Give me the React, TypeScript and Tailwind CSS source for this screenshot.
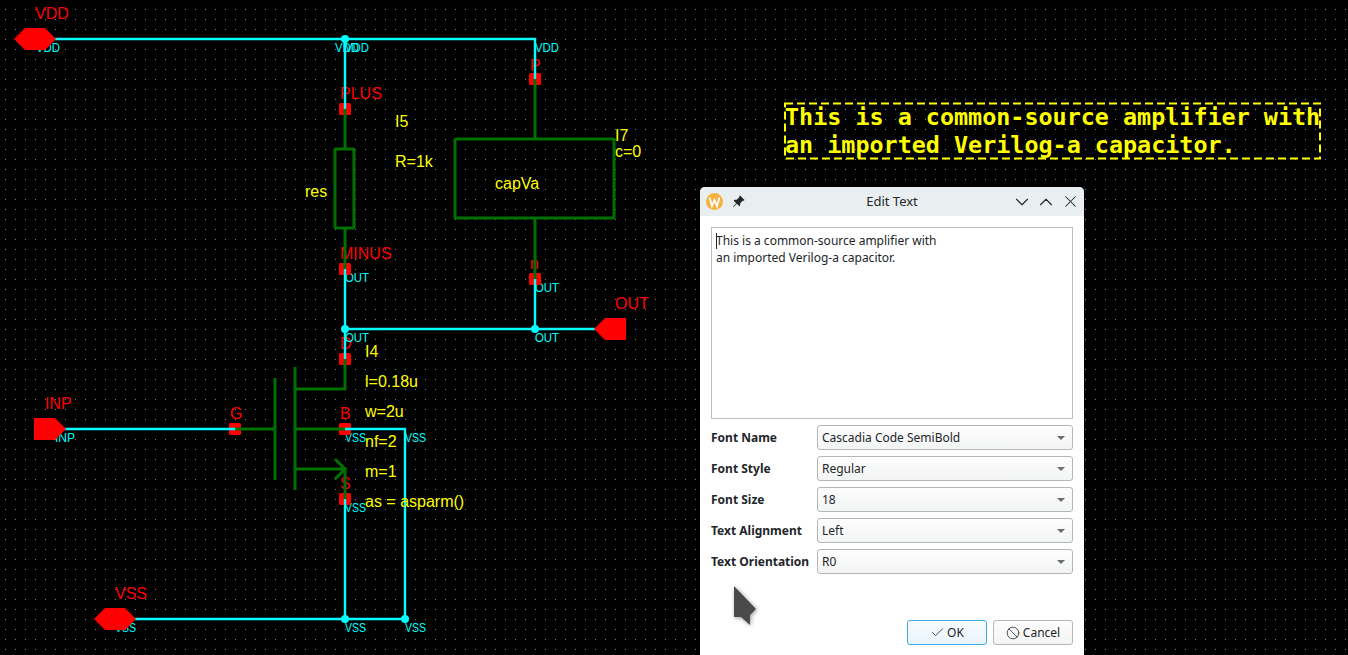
import { Ban, Check, ChevronDown, ChevronUp, X } from 'lucide-react';
import { BsPinAngleFill } from 'react-icons/bs';

const wires = [
  'M50 39H535V79',
  'M345 39V109',
  'M345 269V359',
  'M535 279V329',
  'M345 329H600',
  'M60 429H235',
  'M345 429H405V619',
  'M345 499V619',
  'M130 619H405',
];

const junctions = [
  [345, 39],
  [345, 329],
  [535, 329],
  [345, 619],
  [405, 619],
];

const pinSquares = [
  [345, 109],
  [535, 79],
  [345, 269],
  [535, 279],
  [345, 359],
  [235, 429],
  [345, 429],
  [345, 499],
];

const symbolLines = [
  'M345 109V149',
  'M345 229V269',
  'M535 79V139',
  'M535 218V279',
  'M345 359V389H295',
  'M275 378V480',
  'M295 367V490',
  'M235 429H275',
  'M295 429H345',
  'M295 469H345V499',
  'M335 459L345 469L335 479',
];

// the screenshot's hinted 12px glyphs run narrower than the font's real widths
const netWidths: Record<string, number> = { VDD: 24, OUT: 24, INP: 20, VSS: 21 };

const netLabels: [string, number, number][] = [
  ['VDD', 36, 52],
  ['VDD', 335, 52],
  ['VDD', 345, 52],
  ['VDD', 535, 52],
  ['OUT', 345, 282],
  ['OUT', 535, 292],
  ['OUT', 345, 342],
  ['OUT', 535, 342],
  ['INP', 55, 442],
  ['VSS', 345, 442],
  ['VSS', 405, 442],
  ['VSS', 345, 512],
  ['VSS', 115, 632],
  ['VSS', 345, 632],
  ['VSS', 405, 632],
];

const pinLabels: [string, number, number][] = [
  ['VDD', 35, 19],
  ['VSS', 115, 599],
  ['INP', 45, 409],
  ['OUT', 615, 309],
  ['PLUS', 340, 99],
  ['MINUS', 340, 259],
  ['P', 530, 71],
  ['n', 530, 269],
  ['D', 340, 349],
  ['G', 230, 419],
  ['B', 340, 419],
  ['S', 340, 489],
];

const attrLabels: [string, number, number][] = [
  ['I5', 395, 127],
  ['R=1k', 395, 167],
  ['res', 305, 197],
  ['capVa', 495, 189],
  ['I7', 615, 141],
  ['c=0', 615, 157],
  ['I4', 365, 357],
  ['l=0.18u', 365, 387],
  ['w=2u', 365, 417],
  ['nf=2', 365, 447],
  ['m=1', 365, 477],
  ['as = asparm()', 365, 507],
];

const ioPins = [
  '14,39 25,28 45,28 56,39 45,50 25,50',
  '94,619 105,608 125,608 136,619 125,630 105,630',
  '34,418 55,418 66,429 55,440 34,440',
  '594,329 605,318 626,318 626,340 605,340',
];

const fields = [
  ['Font Name', 'Cascadia Code SemiBold'],
  ['Font Style', 'Regular'],
  ['Font Size', '18'],
  ['Text Alignment', 'Left'],
  ['Text Orientation', 'R0'],
];

function Schematic() {
  return (
    <svg width="1348" height="655" className="block font-['Liberation_Sans',sans-serif]">
      <defs>
        <pattern id="dots" x="5" y="9" width="10" height="10" patternUnits="userSpaceOnUse">
          <rect width="1" height="1" fill="#808080" />
        </pattern>
      </defs>
      <rect width="1348" height="655" fill="url(#dots)" />

      {pinLabels.map(([label, x, y]) => (
        <text key={`${label}${x}`} x={x} y={y} className="fill-[#ff0000] text-[16px]">
          {label}
        </text>
      ))}
      {netLabels.map(([label, x, y]) => (
        <text
          key={`${label}${x}${y}`}
          x={x}
          y={y}
          textLength={netWidths[label]}
          lengthAdjust="spacingAndGlyphs"
          className="fill-[#00ffff] text-[12px]"
        >
          {label}
        </text>
      ))}

      {pinSquares.map(([x, y]) => (
        <rect key={`${x}${y}`} x={x - 6} y={y - 6} width="12" height="12" rx="1.5" fill="#ff0000" />
      ))}

      <g fill="none" stroke="#00ffff" strokeWidth="2.4">
        {wires.map((d) => (
          <path key={d} d={d} />
        ))}
      </g>
      {junctions.map(([x, y]) => (
        <circle key={`${x}${y}`} cx={x} cy={y} r="4" fill="#00ffff" />
      ))}

      <g fill="none" stroke="#007000" strokeWidth="3">
        {symbolLines.map((d) => (
          <path key={d} d={d} />
        ))}
        <rect x="335" y="149" width="19" height="79" rx="1" />
        <rect x="455" y="139" width="159" height="79" rx="1" />
      </g>

      {ioPins.map((points) => (
        <polygon key={points} points={points} fill="#ff0000" />
      ))}

      {attrLabels.map(([label, x, y]) => (
        <text key={`${label}${x}`} x={x} y={y} className="fill-[#ffff00] text-[16px]">
          {label}
        </text>
      ))}

      <rect
        x="785"
        y="103.5"
        width="535"
        height="55"
        fill="none"
        stroke="#ffff00"
        strokeWidth="2"
        strokeDasharray="8 4"
      />
      <g className="fill-[#ffff00] font-['DejaVu_Sans_Mono',monospace] text-[23.4px] font-bold">
        <text x="785" y="125">This is a common-source amplifier with</text>
        <text x="785" y="153">an imported Verilog-a capacitor.</text>
      </g>
    </svg>
  );
}

function ComboBox({ value }: { value: string }) {
  return (
    <div className="flex h-[25px] w-[256px] items-center justify-between rounded-[3px] border border-[#b4b6b8] bg-gradient-to-b from-[#fdfdfd] to-[#f3f4f4] pl-[4px] pr-[7px]">
      <span>{value}</span>
      <span className="h-0 w-0 border-x-[4px] border-t-[4px] border-x-transparent border-t-[#6a6d70]" />
    </div>
  );
}

function EditTextDialog() {
  return (
    <div className="absolute left-[700px] top-[187px] flex h-[490px] w-[384px] flex-col rounded-t-[5px] bg-white font-['Noto_Sans',sans-serif] text-[12px] text-[#232629]">
      <div className="relative flex h-[29px] shrink-0 items-center rounded-t-[5px] bg-[#e9eef1] pl-[6px] pr-[2px]">
        <svg width="17" height="17" viewBox="0 0 17 17">
          <circle cx="8.5" cy="8.5" r="8.5" fill="#f4b13e" />
          <path d="M3.5 4.5L6 13L8.5 7L11 13L13.5 4.5" fill="none" stroke="#ffffff" strokeWidth="1.8" />
        </svg>
        <BsPinAngleFill className="ml-[9px] h-[13px] w-[13px] text-[#232629]" />
        <span className="absolute inset-x-0 text-center text-[13px]">Edit Text</span>
        <div className="relative ml-auto flex items-center">
          <span className="flex w-[24px] justify-center">
            <ChevronDown size={22} strokeWidth={1.2} />
          </span>
          <span className="flex w-[24px] justify-center">
            <ChevronUp size={22} strokeWidth={1.2} />
          </span>
          <span className="flex w-[24px] justify-center">
            <X size={19} strokeWidth={1.3} />
          </span>
        </div>
      </div>

      <div className="flex flex-1 flex-col px-[11px] pt-[11px]">
        <div className="h-[192px] border border-[#bdbdbd] bg-white px-[4px] pt-[4px] leading-[17px]">
          <div className="relative">
            <span className="absolute left-0 top-[1px] h-[16px] w-px bg-[#232629]" />
            This is a common-source amplifier with
          </div>
          <div>an imported Verilog-a capacitor.</div>
        </div>

        <div className="mt-[6px] flex flex-col gap-[6px]">
          {fields.map(([label, value]) => (
            <div key={label} className="flex items-center justify-between">
              <span className="font-bold">{label}</span>
              <ComboBox value={value} />
            </div>
          ))}
        </div>

        <div className="mt-[46px] flex justify-end gap-[6px]">
          <button className="flex h-[25px] w-[80px] items-center justify-center gap-[2px] rounded-[3px] border border-[#3daee9] bg-gradient-to-b from-[#f7fbfe] to-[#e9f4fb]">
            <Check size={15} strokeWidth={1.3} />
            OK
          </button>
          <button className="flex h-[25px] w-[80px] items-center justify-center gap-[3px] rounded-[3px] border border-[#b4b6b8] bg-gradient-to-b from-[#fdfdfd] to-[#f3f4f4]">
            <Ban size={14} strokeWidth={1.3} />
            Cancel
          </button>
        </div>
      </div>

      <svg
        width="28"
        height="44"
        viewBox="0 0 28 44"
        className="absolute left-[31px] top-[397px] drop-shadow-[1px_1px_2px_rgba(0,0,0,0.4)]"
      >
        <path d="M3 2L25 25L19 31V41L10 33H3Z" fill="#4a4a4a" />
      </svg>
    </div>
  );
}

export default function App() {
  return (
    <div className="relative h-[655px] w-[1348px] overflow-hidden bg-black">
      <Schematic />
      <EditTextDialog />
    </div>
  );
}
